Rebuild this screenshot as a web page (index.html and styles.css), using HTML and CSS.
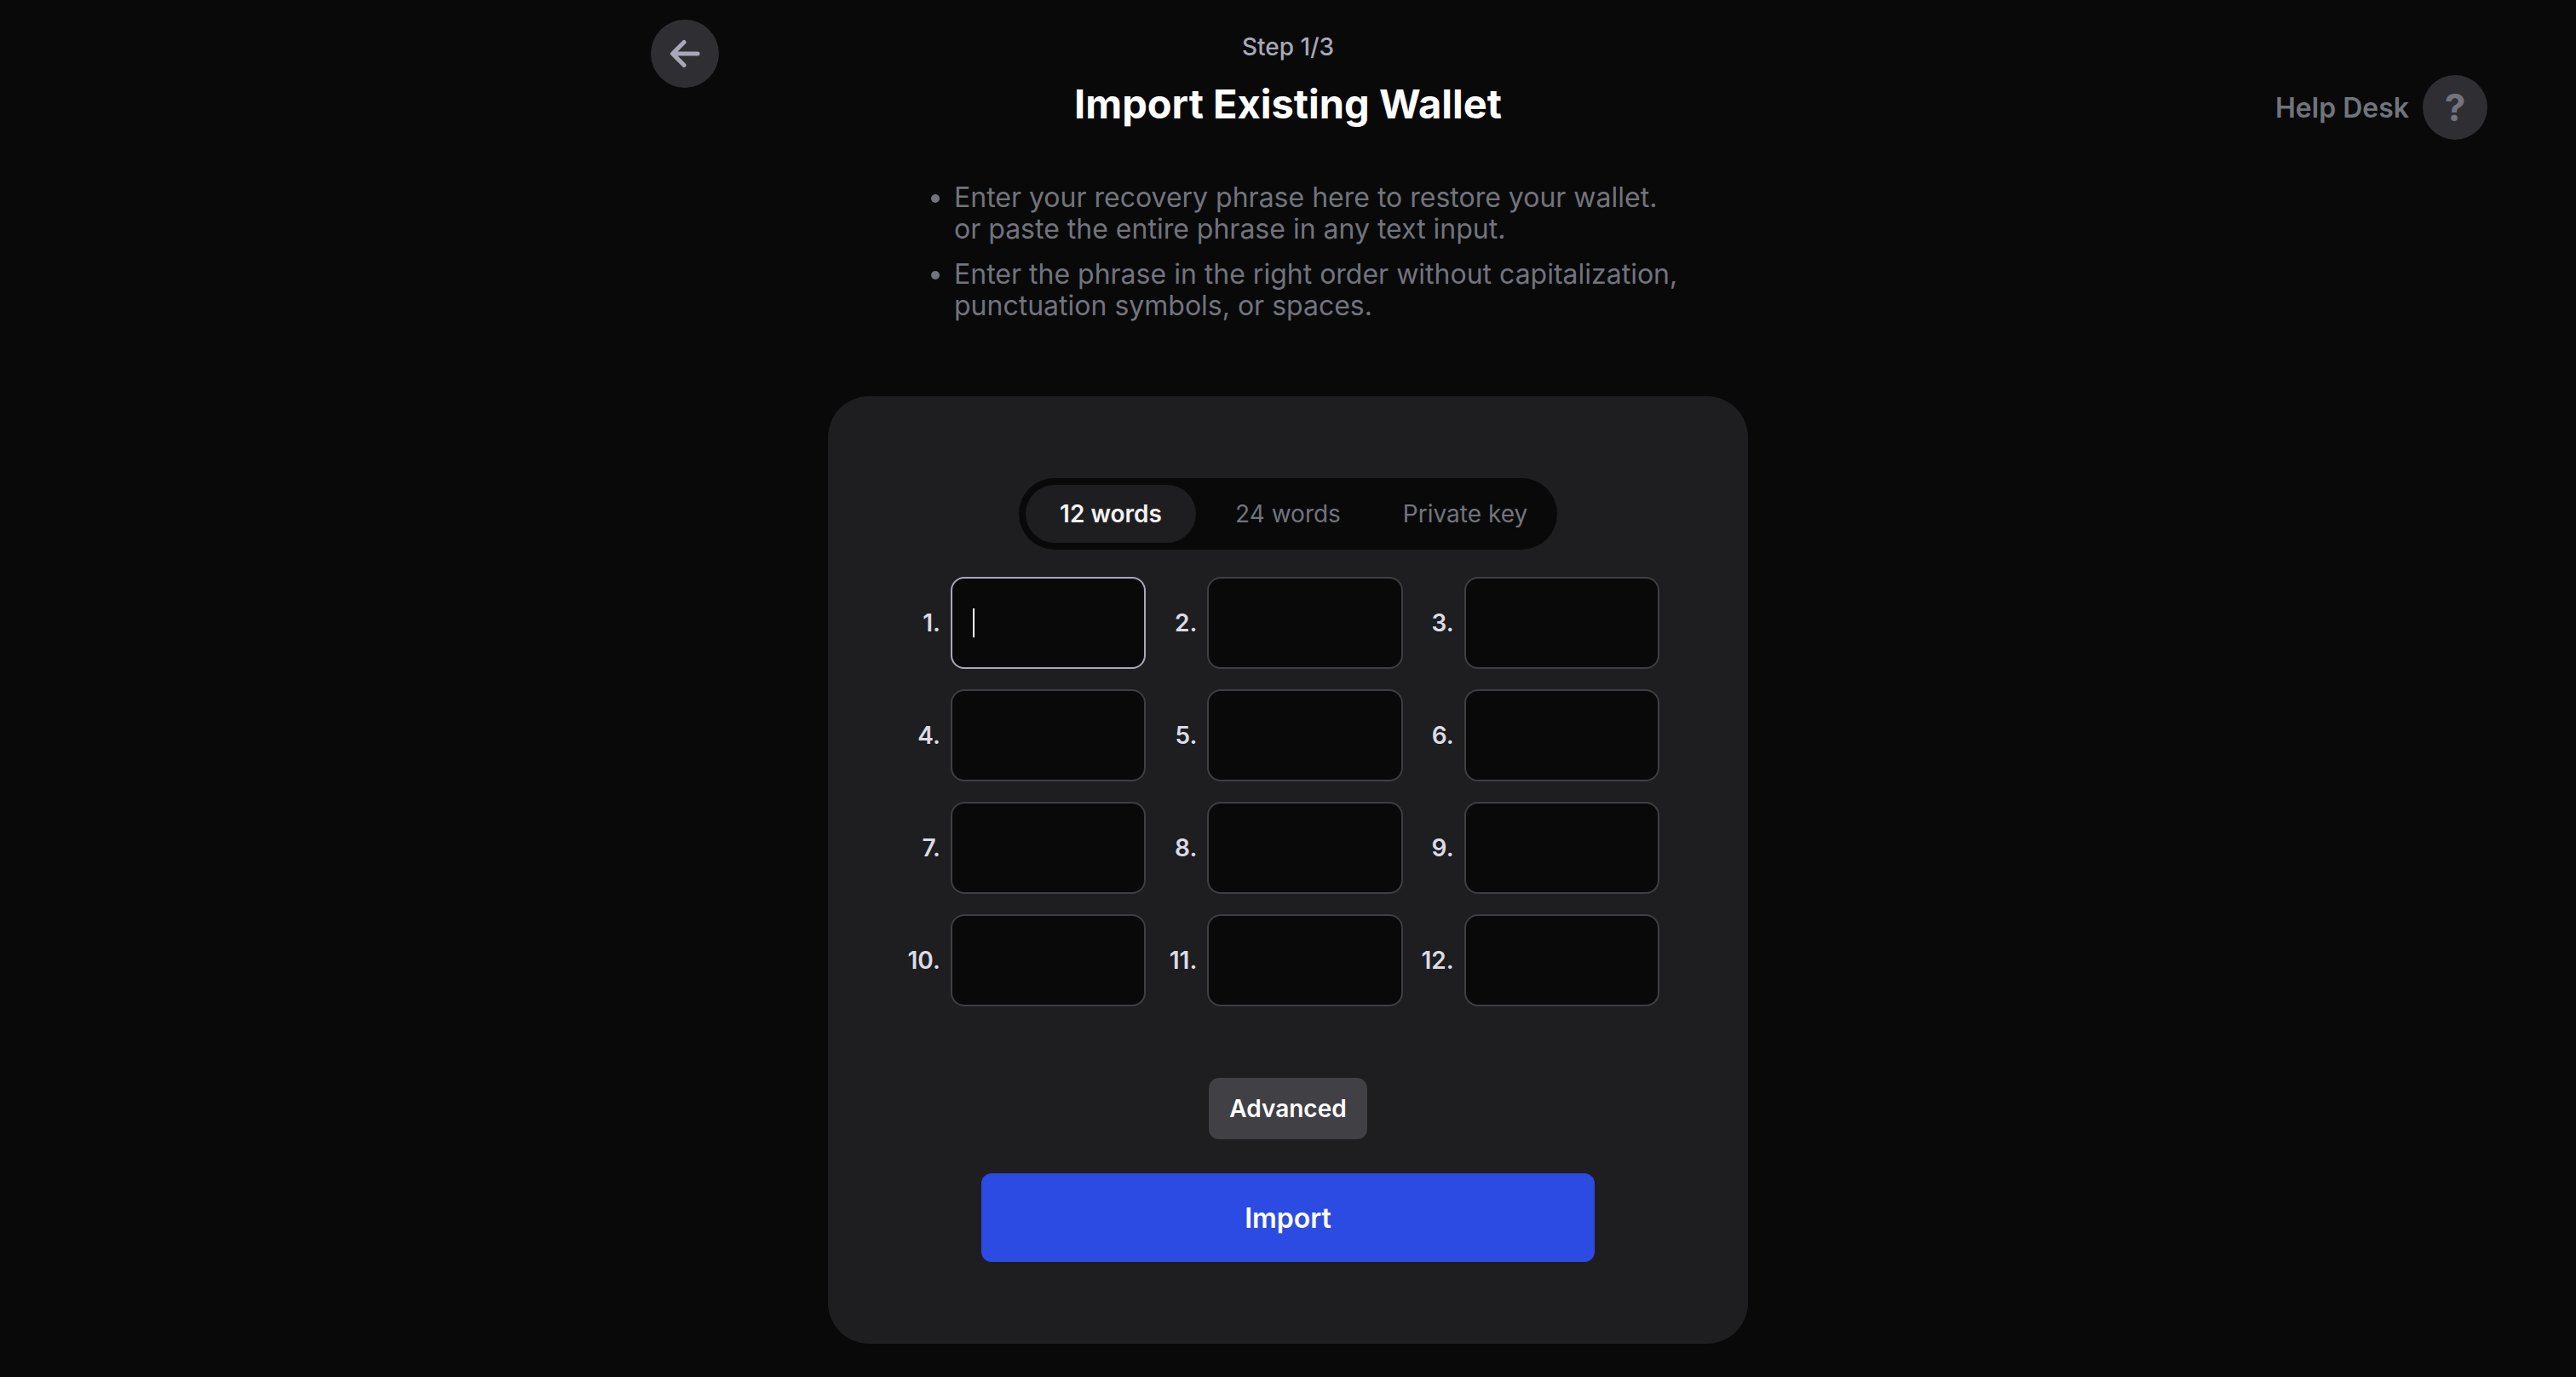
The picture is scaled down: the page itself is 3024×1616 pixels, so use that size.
FILE: index.html
```html
<!DOCTYPE html>
<html lang="en">
<head>
<meta charset="utf-8">
<meta name="viewport" content="width=device-width, initial-scale=1">
<title>Import Existing Wallet</title>
<link rel="stylesheet" href="styles.css">
</head>
<body>
<div class="page">
  <main class="main">
    <header class="header">
      <button class="round-button back" type="button" aria-label="Back">
        <svg width="36" height="34" viewBox="0 0 36 34" fill="none" stroke="currentColor" stroke-width="5" stroke-linecap="round" stroke-linejoin="round" aria-hidden="true">
          <path d="M17 3.500 3.500 17 17 30.500M4 17H33"/>
        </svg>
      </button>
      <div class="heading">
        <p class="step">Step 1/3</p>
        <h1 class="title">Import Existing Wallet</h1>
      </div>
    </header>

    <ul class="notes">
      <li class="note"><span>Enter your recovery phrase here to restore your wallet.<br>or paste the entire phrase in any text input.</span></li>
      <li class="note"><span>Enter the phrase in the right order without capitalization,<br>punctuation symbols, or spaces.</span></li>
    </ul>

    <form class="card">
      <div class="tabs" role="tablist">
        <button class="tab tab-active" type="button" role="tab" aria-selected="true">12 words</button>
        <button class="tab" type="button" role="tab" aria-selected="false">24 words</button>
        <button class="tab" type="button" role="tab" aria-selected="false">Private key</button>
      </div>

      <div class="words">
        <div class="word"><label for="w1">1.</label><div class="field field-active"><input id="w1" type="text" autocomplete="off"><span class="caret"></span></div></div>
        <div class="word"><label for="w2">2.</label><div class="field"><input id="w2" type="text" autocomplete="off"></div></div>
        <div class="word"><label for="w3">3.</label><div class="field"><input id="w3" type="text" autocomplete="off"></div></div>
        <div class="word"><label for="w4">4.</label><div class="field"><input id="w4" type="text" autocomplete="off"></div></div>
        <div class="word"><label for="w5">5.</label><div class="field"><input id="w5" type="text" autocomplete="off"></div></div>
        <div class="word"><label for="w6">6.</label><div class="field"><input id="w6" type="text" autocomplete="off"></div></div>
        <div class="word"><label for="w7">7.</label><div class="field"><input id="w7" type="text" autocomplete="off"></div></div>
        <div class="word"><label for="w8">8.</label><div class="field"><input id="w8" type="text" autocomplete="off"></div></div>
        <div class="word"><label for="w9">9.</label><div class="field"><input id="w9" type="text" autocomplete="off"></div></div>
        <div class="word"><label for="w10">10.</label><div class="field"><input id="w10" type="text" autocomplete="off"></div></div>
        <div class="word"><label for="w11">11.</label><div class="field"><input id="w11" type="text" autocomplete="off"></div></div>
        <div class="word"><label for="w12">12.</label><div class="field"><input id="w12" type="text" autocomplete="off"></div></div>
      </div>

      <button class="advanced" type="button">Advanced</button>
      <button class="import" type="submit">Import</button>
    </form>
  </main>

  <aside class="side">
    <a class="help" href="#help">
      <span>Help Desk</span>
      <span class="help-mark">?</span>
    </a>
  </aside>
</div>
</body>
</html>
```
FILE: styles.css
```css
* {
  box-sizing: border-box;
}

body {
  margin: 0;
  background: #09090a;
  color: #ffffff;
  font-family: Inter, "Liberation Sans", sans-serif;
  font-optical-sizing: none;
}

button,
input {
  font: inherit;
  font-optical-sizing: inherit;
  border: 0;
  margin: 0;
  padding: 0;
  color: inherit;
}

button {
  cursor: pointer;
}

.page {
  display: grid;
  grid-template-columns: 1fr minmax(0, 1496px) 1fr;
  min-height: 100vh;
}

.main {
  grid-column: 2;
  display: flex;
  flex-direction: column;
  align-items: center;
  padding-bottom: 39px;
}

.header {
  display: grid;
  grid-template-columns: 80px 1fr 80px;
  width: 100%;
}

.round-button {
  display: flex;
  align-items: center;
  justify-content: center;
  width: 80px;
  height: 80px;
  border-radius: 50%;
  background: #2f2e33;
  color: #a9a8b6;
}

.back {
  margin-top: 23px;
}

.heading {
  padding-top: 37px;
  text-align: center;
}

.step {
  margin: 0 0 21px;
  color: #a9a8b6;
  font-size: 28px;
  font-weight: 500;
  line-height: 36px;
}

.title {
  margin: 0;
  font-size: 47px;
  font-weight: 700;
  line-height: 56px;
  font-optical-sizing: auto;
}

.notes {
  display: grid;
  gap: 16px;
  width: 100%;
  max-width: 936px;
  margin: 63px 0 88px;
  padding: 0 0 0 49px;
  list-style: none;
  color: #72747c;
  font-size: 32px;
  line-height: 37px;
}

.note {
  display: grid;
  grid-template-columns: 10px 1fr;
  gap: 17px;
}

.note::before {
  content: "";
  height: 10px;
  margin-top: 15px;
  border-radius: 50%;
  background: currentColor;
}

.card {
  display: flex;
  flex-direction: column;
  align-items: center;
  width: 100%;
  max-width: 1080px;
  padding: 96px 88px;
  border-radius: 48px;
  background: #1e1e20;
}

.tabs {
  display: grid;
  grid-template-columns: repeat(3, 200px);
  gap: 8px;
  padding: 8px;
  border-radius: 42px;
  background: #09090a;
}

.tab {
  height: 68px;
  border-radius: 34px;
  background: transparent;
  color: #72747c;
  font-size: 28px;
}

.tab-active {
  background: #1e1e20;
  color: #f2f2f5;
  font-weight: 600;
}

.words {
  display: grid;
  grid-template-columns: repeat(3, 1fr);
  gap: 24px 16px;
  width: 100%;
  padding-right: 16px;
  margin: 32px 0 84px;
}

.word {
  display: grid;
  grid-template-columns: 44px 1fr;
  align-items: center;
  gap: 12px;
  color: #dcdbe4;
  font-size: 28px;
  font-weight: 600;
  text-align: right;
}

.field {
  position: relative;
}

.field input {
  display: block;
  width: 100%;
  height: 108px;
  padding: 0 24px;
  border: 2px solid #3f3f43;
  border-radius: 16px;
  background: #09090a;
  outline: 0;
}

.field-active input {
  border-color: #a9a8b6;
}

.caret {
  position: absolute;
  top: 37px;
  left: 26px;
  width: 2px;
  height: 34px;
  background: #ffffff;
}

.advanced {
  height: 72px;
  margin-bottom: 40px;
  padding: 0 24px;
  border-radius: 12px;
  background: #414045;
  font-size: 28px;
  font-weight: 600;
}

.import {
  width: 100%;
  max-width: 720px;
  height: 104px;
  border-radius: 12px;
  background: #2c4be2;
  font-size: 32px;
  font-weight: 600;
}

.side {
  display: flex;
  align-items: flex-start;
  justify-content: flex-end;
  padding: 88px 104px 0 0;
}

.help {
  display: flex;
  align-items: center;
  gap: 16px;
  color: #72747c;
  font-size: 32px;
  font-weight: 600;
  text-decoration: none;
}

.help-mark {
  width: 76px;
  border-radius: 50%;
  background: #2f2e33;
  font-size: 44px;
  font-weight: 700;
  line-height: 76px;
  text-align: center;
}
```
